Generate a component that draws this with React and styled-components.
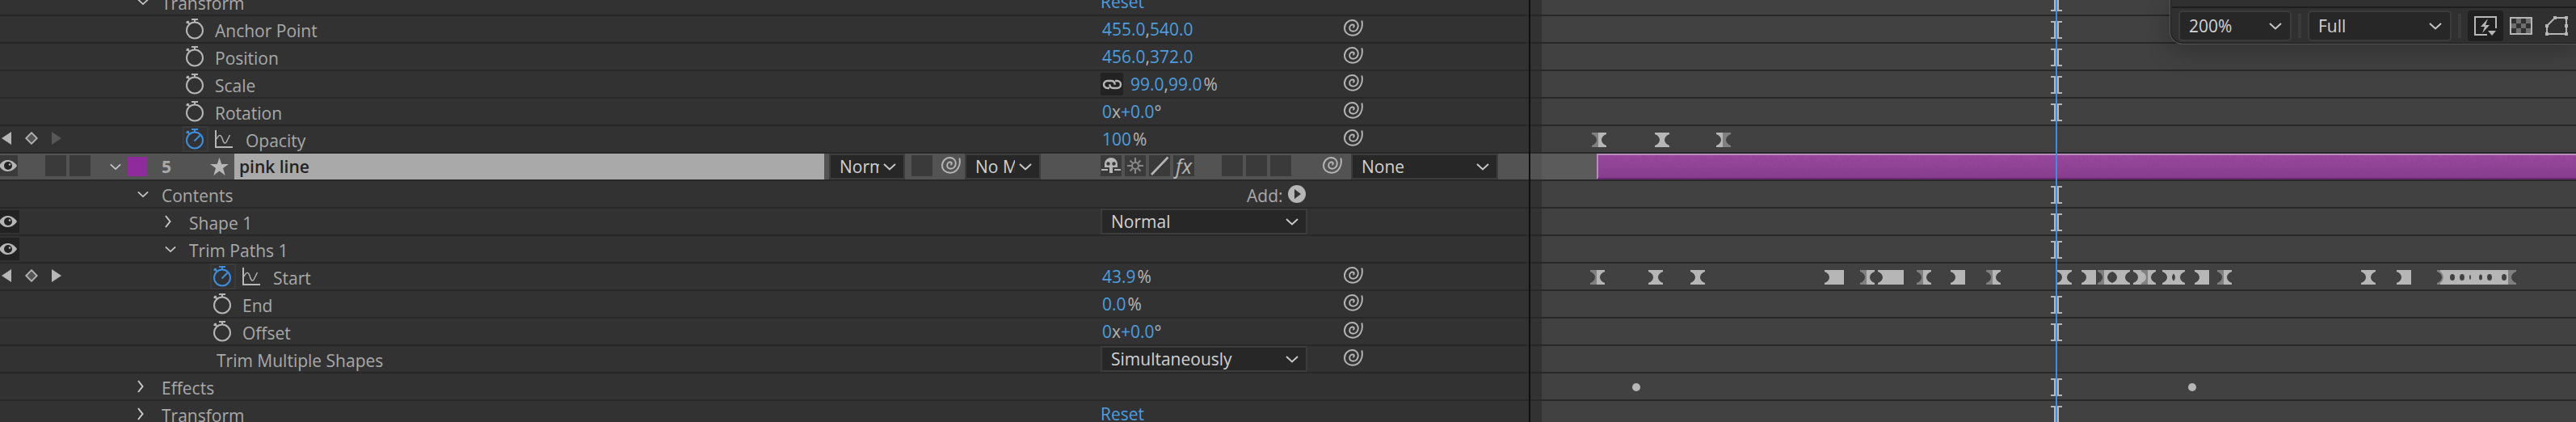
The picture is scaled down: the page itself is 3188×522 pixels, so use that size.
import React from 'react';
import styled, { createGlobalStyle } from 'styled-components';

const colors = {
  panel: '#323232',
  line: '#282828',
  lane: '#414141',
  selected: '#535353',
  selectedLane: '#5b5b5b',
  field: '#272727',
  fieldBorder: '#3c3c3c',
  well: '#3a3a3a',
  text: '#a9a9a9',
  textLight: '#d2d2d2',
  icon: '#b6b6b6',
  iconDim: '#808080',
  blue: '#4a9fe0',
  blueDark: '#3c8ee0',
  purple: '#8f2b9c',
};

const GlobalStyle = createGlobalStyle`
  * {
    box-sizing: border-box;
  }
  body {
    margin: 0;
    overflow: hidden;
    background-color: ${colors.panel};
  }
`;

const Page = styled.main`
  position: relative;
  display: grid;
  grid-template-columns: 1892px 1fr;
  height: 100vh;
  overflow: hidden;
  font-family: 'Open Sans', 'Noto Sans', sans-serif;
  font-size: 21px;
  font-weight: 500;
  line-height: 28px;
  color: ${colors.text};
  background-color: ${colors.panel};
`;

/* Both halves are scrolled together, the first row is partly out of view */
const Rows = styled.div`
  margin-top: -14px;
`;

const Row = styled.div`
  display: grid;
  grid-template-columns: 136px 1fr 342px 275px 255px;
  height: 34px;
  border-bottom: 2px solid ${colors.line};
  background-color: ${({ $selected }) => ($selected ? colors.selected : colors.panel)};
`;

const Cell = styled.div`
  display: flex;
  align-items: center;
  min-width: 0;
  grid-column: span ${({ $span }) => $span || 1};
  padding-left: ${({ $indent }) => $indent || 0}px;
`;

const Button = styled.button`
  display: flex;
  align-items: center;
  flex: none;
  padding: 0;
  border: 0;
  background: none;
  font: inherit;
  color: inherit;
`;

const KeyNav = styled.div`
  display: flex;
  align-items: center;
  gap: 17px;
  padding: 0 0 2px 2px;
`;

const EyeButton = styled(Button)`
  width: ${({ $small }) => ($small ? 22 : 24)}px;
  height: ${({ $small }) => ($small ? 26 : 28)}px;
  background-color: ${({ $small }) => ($small ? colors.well : '#222222')};
`;

const Well = styled(Button)`
  justify-content: center;
  width: 26px;
  height: 26px;
  background-color: ${colors.well};
`;

const WellGroup = styled.div`
  display: flex;
  gap: 4px;
  margin: 0 0 2px ${({ $left }) => $left || 0}px;
`;

const AvGroup = styled.div`
  display: flex;
  align-items: center;
  margin-bottom: ${({ $layer }) => ($layer ? 2 : 0)}px;
`;

const Twirl = styled(Button)`
  width: 14px;
  margin-right: ${({ $gap }) => $gap || 16}px;
`;

const Swatch = styled.span`
  width: 24px;
  height: 24px;
  background-color: ${colors.purple};
`;

const LayerNumber = styled.span`
  width: 78px;
  padding-left: 18px;
  font-weight: 700;
`;

const LayerName = styled.span`
  align-self: stretch;
  flex: 1;
  margin-left: 6px;
  padding: 2px 6px;
  font-weight: 600;
  color: #222222;
  background-color: #a9a9a9;
`;

const Label = styled.span`
  padding-top: 4px;
  margin-left: ${({ $gap }) => $gap || 0}px;
  white-space: nowrap;
`;

const Stopwatch = styled(Button)`
  justify-content: center;
  width: 32px;
  height: 32px;
  margin-right: 8px;
  border: 2px solid ${({ $active }) => ($active ? '#3a3a3a' : 'transparent')};
`;

const Value = styled(Button)`
  color: ${colors.blue};
`;

const Unit = styled.span`
  margin-left: ${({ $gap }) => $gap || 0}px;
  color: ${colors.icon};
`;

const LinkButton = styled(Button)`
  justify-content: center;
  width: 28px;
  height: 28px;
  margin: 0 9px 0 -2px;
  background-color: #222222;
`;

const AddButton = styled(Button)`
  gap: 6px;
  margin-left: 181px;
  color: ${colors.text};
`;

const PickWhip = styled(Button)`
  margin: 0 ${({ $right }) => $right || 0}px 4px ${({ $left }) => $left || 0}px;
`;

const SelectBox = styled.div`
  display: grid;
  grid-template-columns: 1fr ${({ $arrow }) => $arrow || 27}px;
  align-items: center;
  flex: none;
  width: ${({ $width }) => $width}px;
  height: ${({ $tall }) => ($tall ? 38 : 32)}px;
  margin-left: ${({ $left }) => $left || 0}px;
  > svg {
    grid-area: 1 / 2;
    pointer-events: none;
  }
`;

const SelectInput = styled.select`
  grid-area: 1 / 1 / 2 / 3;
  width: 100%;
  height: 100%;
  padding: 0 30px 0 11px;
  border: 2px solid ${colors.fieldBorder};
  border-radius: ${({ $round }) => ($round ? 5 : 0)}px;
  appearance: none;
  font: inherit;
  color: ${colors.textLight};
  background-color: ${colors.field};
`;

const Timeline = styled.section`
  position: relative;
  min-width: 0;
  border-left: 2px solid #101010;
`;

const LaneRow = styled.div`
  height: 34px;
  padding-left: 14px;
  border-bottom: 2px solid ${colors.line};
  background-color: ${({ $selected }) => ($selected ? colors.selected : colors.panel)};
`;

const Lane = styled.div`
  position: relative;
  height: 32px;
  background-color: ${({ $selected }) => ($selected ? colors.selectedLane : colors.lane)};
`;

/* Anything placed in time: keyframes, markers, the beam under the playhead */
const Mark = styled.svg`
  position: absolute;
  left: ${({ $at }) => $at}px;
  top: ${({ $top }) => $top}px;
`;

const LayerBar = styled.div`
  height: 32px;
  margin-left: 68px;
  border-top: 2px solid #b98cbb;
  border-left: 2px solid #b98cbb;
  border-bottom: 2px solid #6c2b71;
  background: linear-gradient(#9a4aa0, #873d8d);
  > svg {
    display: block;
  }
`;

const Playhead = styled.div`
  position: absolute;
  top: 0;
  bottom: 0;
  left: 650px;
  width: 2px;
  background-color: ${colors.blueDark};
`;

const Viewer = styled.aside`
  position: absolute;
  top: 0;
  right: 0;
  width: 503px;
  padding-top: 8px;
  border: 1px solid #565656;
  border-width: 0 0 1px 1px;
  border-radius: 0 0 0 16px;
  background-color: #303030;
  box-shadow: inset 1px -1px 0 #1f1f1f, 0 8px 30px rgba(0, 0, 0, 0.25);
`;

const ViewerBar = styled.div`
  display: flex;
  align-items: center;
  gap: 8px;
  height: 46px;
  margin-left: 2px;
  padding-left: 8px;
  border-top: 2px solid #1e1e1e;
`;

const Divider = styled.span`
  flex: none;
  width: 4px;
  height: 30px;
  background-color: #3b3b3b;
`;

const ViewerButton = styled(Button)`
  justify-content: center;
  width: 44px;
  height: 38px;
  margin-right: ${({ $pull }) => ($pull ? -8 : 0)}px;
  border-radius: 4px;
  background-color: ${({ $active }) => ($active ? '#202020' : 'transparent')};
`;

function Chevron({ closed }) {
  return closed ? (
    <svg width="8" height="16" viewBox="0 0 8 16" fill="none" stroke="#c8c8c8" strokeWidth="2">
      <path d="M1 1l5.5 7L1 15" />
    </svg>
  ) : (
    <svg width="16" height="9" viewBox="0 0 16 9" fill="none" stroke="#c8c8c8" strokeWidth="2">
      <path d="M1 1l7 6.5L15 1" />
    </svg>
  );
}

function Clock({ active }) {
  const color = active ? colors.blueDark : colors.icon;
  return (
    <svg width="24" height="28" viewBox="0 0 24 28" fill="none" stroke={color} strokeWidth="2">
      <circle cx="11" cy="15.5" r="10" />
      <path d="M7 2h8M11 2v4M0.500 6.500l3.500-2M1.500 4l3 4" />
      {active && <path d="M10.500 16.500l7-7" />}
    </svg>
  );
}

function Graph() {
  return (
    <svg width="22" height="22" viewBox="0 0 22 22" fill="none" stroke={colors.icon}>
      <path strokeWidth="2" d="M1 0v21h21" />
      <path strokeWidth="1.4" d="M2 11C5 5 7 5 9 10c2 7 4 8 6 3l3.500-7" />
    </svg>
  );
}

function Spiral() {
  return (
    <svg width="24" height="21" viewBox="0 0 24 21" fill="none" stroke={colors.icon} strokeWidth="1.9">
      <path d="M22.300 1.500C24.500 10 20 19.800 11 19.800 5 19.800 1 15.800 1 10.800 1 5 5.500 1 10.500 1c4.500 0 7.300 3.200 7.300 7 0 4-2.800 6.700-6 6.700-2.800 0-4.600-1.800-4.600-4.200 0-2.500 1.800-4 3.700-4 1 0 1.900.6 1.900 1.700 0 .9-.6 1.500-1.500 1.600" />
    </svg>
  );
}

function Eye() {
  return (
    <svg width="21" height="14" viewBox="0 0 21 14">
      <path fill={colors.icon} d="M-1 7C4-2.300 15-2.300 21 7 15 16.300 4 16.300-1 7z" />
      <circle cx="10" cy="7" r="5" fill="#222222" />
      <circle cx="12" cy="5.500" r="1.300" fill={colors.icon} />
    </svg>
  );
}

function Star() {
  return (
    <svg width="24" height="22" viewBox="0 0 24 22">
      <path fill={colors.icon} d="M11.500 0l2.800 8H23l-7 5 2.700 9-7.200-5.500L4.300 22 7 13 0 8h8.700z" />
    </svg>
  );
}

function Chain() {
  return (
    <svg width="25" height="13" viewBox="0 0 25 13" fill="none" stroke={colors.icon} strokeWidth="2.400">
      <path d="M9 11H6.500a4.500 4.500 0 0 1 0-9H11c3 0 4.700 2 4.700 4.700" />
      <path d="M16 2h2.500a4.500 4.500 0 0 1 0 9H14c-3 0-4.700-2-4.700-4.700" />
    </svg>
  );
}

function Shy() {
  return (
    <svg width="24" height="20" viewBox="0 0 24 20">
      <path fill={colors.icon} d="M4 12V8c0-5 4-8 8-8s8 3 8 8v4h-6v7h-4v-7zM0 14h8v2H0zM16 14h8v2h-8z" />
      <circle cx="8.500" cy="7.500" r="2.200" fill={colors.well} />
      <circle cx="15.500" cy="7.500" r="2.200" fill={colors.well} />
    </svg>
  );
}

function Sun() {
  return (
    <svg width="20" height="20" viewBox="0 0 20 20" fill="none" stroke="#8a8a8a" strokeWidth="2">
      <circle cx="10" cy="10" r="4" />
      <path d="M10 0v5M10 15v5M0 10h5M15 10h5M3.500 3.500l3 3M13.500 13.500l3 3M3.500 16.500l3-3M13.500 6.500l3-3" />
    </svg>
  );
}

const Fx = styled.span`
  font-size: 25px;
  font-style: italic;
  font-weight: 400;
  line-height: 26px;
  color: ${colors.icon};
`;

function Quality() {
  return (
    <svg width="24" height="24" viewBox="0 0 24 24" stroke={colors.icon} strokeWidth="2.600">
      <path d="M2 23L22.500 1.500" />
    </svg>
  );
}

function Select({
  label, value, width, left, arrow, tall,
}) {
  return (
    <SelectBox $width={width} $left={left} $arrow={arrow} $tall={tall}>
      <SelectInput aria-label={label} defaultValue={value} $round={tall}>
        <option>{value}</option>
      </SelectInput>
      <Chevron />
    </SelectBox>
  );
}

function KeyframeNav({ last }) {
  return (
    <KeyNav>
      <Button aria-label="Previous keyframe">
        <svg width="12" height="16" viewBox="0 0 12 16"><path fill={colors.icon} d="M12 0v16L0 8z" /></svg>
      </Button>
      <Button aria-label="Toggle keyframe">
        <svg width="16" height="16" viewBox="0 0 16 16">
          <path fill="#555555" stroke={colors.icon} strokeWidth="1.800" d="M8 1.200L14.800 8 8 14.800 1.200 8z" />
        </svg>
      </Button>
      <Button aria-label="Next keyframe">
        <svg width="12" height="16" viewBox="0 0 12 16"><path fill={last ? '#575757' : colors.icon} d="M0 0v16l12-8z" /></svg>
      </Button>
    </KeyNav>
  );
}

const BRIGHT_LEFT = 'M0 0H8V18H0V16C8 13 8 5 0 2z';
const BRIGHT_RIGHT = 'M18 0H8V18H18V16C10 13 10 5 18 2z';

/* kind: ease, first (nothing before it), last (nothing after it), hold */
function Keyframe({ at, kind }) {
  return (
    <Mark $at={at} $top={8} width="18" height="18" viewBox="0 0 18 18">
      <path fill={kind === 'first' ? colors.iconDim : colors.icon} d={BRIGHT_LEFT} />
      <path
        fill={kind === 'last' ? colors.iconDim : colors.icon}
        d={kind === 'hold' ? 'M8 0h10v18H8z' : BRIGHT_RIGHT}
      />
    </Mark>
  );
}

function KeyframeRun({ at }) {
  return (
    <Mark $at={at} $top={8} width="98" height="18" viewBox="0 0 98 18">
      <path fill={colors.iconDim} d="M0 0h8v18H0v-2c8-3 8-11 0-14zM88 0h10v2c-8 3-8 11 0 14v2H88z" />
      <path fill={colors.icon} d="M4 0h84v18H4v-2c5-3 5-11 0-14z" />
      <g fill={colors.lane}>
        <ellipse cx="19" cy="9" rx="3" ry="4" />
        <ellipse cx="31" cy="9" rx="3" ry="4" />
        <ellipse cx="41" cy="9" rx="1" ry="3" />
        <ellipse cx="54" cy="9" rx="2" ry="3.500" />
        <ellipse cx="65" cy="9" rx="3" ry="4" />
        <ellipse cx="83" cy="9" rx="3" ry="4" />
      </g>
    </Mark>
  );
}

function Beam() {
  return (
    <Mark $at={630} $top={6} width="14" height="22" viewBox="0 0 14 22">
      <path fill={colors.icon} d="M0 0h14v2h-4v18h4v2H0v-2h4V2H0z" />
    </Mark>
  );
}

function Texture() {
  return (
    <svg width="100%" height="28" aria-hidden="true">
      <filter id="grain" x="0" y="0" width="100%" height="100%">
        <feTurbulence type="fractalNoise" baseFrequency="0.35" numOctaves="2" />
        <feColorMatrix values="0 0 0 0 0.25  0 0 0 0 0.05  0 0 0 0 0.25  1.4 0 0 0 -0.5" />
      </filter>
      <rect width="100%" height="28" filter="url(#grain)" opacity="0.7" />
    </svg>
  );
}

const degrees = [['0'], ['x', 'unit'], ['+0.0'], ['°', 'unit']];

const rows = [
  { type: 'group', label: 'Transform', level: 0, reset: true, beam: true },
  { type: 'property', label: 'Anchor Point', level: 0, beam: true, value: [['455.0'], [',', 'unit'], ['540.0']] },
  { type: 'property', label: 'Position', level: 0, beam: true, value: [['456.0'], [',', 'unit'], ['372.0']] },
  {
    type: 'property', label: 'Scale', level: 0, beam: true, linked: true, value: [['99.0'], [',', 'unit'], ['99.0'], ['%', 'unit', 2]],
  },
  { type: 'property', label: 'Rotation', level: 0, beam: true, value: degrees },
  {
    type: 'property',
    label: 'Opacity',
    level: 0,
    animated: true,
    last: true,
    value: [['100'], ['%', 'unit', 2]],
    keys: [[62, 'first'], [140, 'ease'], [216, 'last']],
  },
  { type: 'layer' },
  { type: 'group', label: 'Contents', level: 0, add: true, beam: true },
  {
    type: 'group', label: 'Shape 1', level: 1, closed: true, eye: true, select: 'Normal', beam: true,
  },
  { type: 'group', label: 'Trim Paths 1', level: 1, eye: true, beam: true },
  {
    type: 'property',
    label: 'Start',
    level: 1,
    animated: true,
    value: [['43.9'], ['%', 'unit', 2]],
    keys: [
      [60, 'first'], [132, 'ease'], [184, 'ease'], [350, 'hold'], [356, 'hold'],
      [394, 'first'], [416, 'hold'], [424, 'hold'], [430, 'hold'], [464, 'first'],
      [506, 'hold'], [550, 'first'], [638, 'ease'], [668, 'hold'], [688, 'first'],
      [706, 'ease'], [710, 'ease'], [732, 'hold'], [742, 'first'], [768, 'ease'],
      [778, 'ease'], [808, 'hold'], [836, 'first'], [1014, 'ease'], [1058, 'hold'],
    ],
    run: 1108,
  },
  { type: 'property', label: 'End', level: 1, beam: true, value: [['0.0'], ['%', 'unit', 2]] },
  { type: 'property', label: 'Offset', level: 1, beam: true, value: degrees },
  { type: 'option', label: 'Trim Multiple Shapes', select: 'Simultaneously' },
  {
    type: 'group', label: 'Effects', level: 0, closed: true, beam: true, dots: [112, 800],
  },
  {
    type: 'group', label: 'Transform', level: 0, closed: true, reset: true, beam: true,
  },
];

function GroupRow({ row }) {
  return (
    <Row>
      <Cell>
        {row.eye && <EyeButton aria-label={`Show ${row.label}`}><Eye /></EyeButton>}
      </Cell>
      <Cell $span={2} $indent={34 + row.level * 34}>
        <Twirl aria-label={`Toggle ${row.label}`}><Chevron closed={row.closed} /></Twirl>
        <Label>{row.label}</Label>
      </Cell>
      <Cell $span={2}>
        {row.reset && <Value>Reset</Value>}
        {row.select && <Select label={`${row.label} mode`} value={row.select} width={256} />}
        {row.add && (
          <AddButton>
            <Label>Add:</Label>
            <svg width="22" height="22" viewBox="0 0 22 22">
              <circle cx="11" cy="11" r="11" fill={colors.icon} />
              <path fill={colors.panel} d="M8 5v12l8-6z" />
            </svg>
          </AddButton>
        )}
      </Cell>
    </Row>
  );
}

function PropertyRow({ row }) {
  return (
    <Row>
      <Cell>{row.animated && <KeyframeNav last={row.last} />}</Cell>
      <Cell $span={2} $indent={90 + row.level * 34}>
        <Stopwatch aria-label={`Animate ${row.label}`} $active={row.animated}>
          <Clock active={row.animated} />
        </Stopwatch>
        {row.animated && <Graph />}
        <Label $gap={row.animated ? 16 : 0}>{row.label}</Label>
      </Cell>
      <Cell $indent={2}>
        {row.linked && <LinkButton aria-label="Constrain proportions"><Chain /></LinkButton>}
        {row.value.map(([text, unit, gap], i) => (
          unit
            ? <Unit key={i} $gap={gap}>{text}</Unit>
            : <Value key={i}>{text}</Value>
        ))}
      </Cell>
      <Cell $indent={26}>
        <PickWhip aria-label={`${row.label} expression`}><Spiral /></PickWhip>
      </Cell>
    </Row>
  );
}

function OptionRow({ row }) {
  return (
    <Row>
      <Cell />
      <Cell $span={2} $indent={132}><Label>{row.label}</Label></Cell>
      <Cell><Select label={row.label} value={row.select} width={256} /></Cell>
      <Cell $indent={26}>
        <PickWhip aria-label={`${row.label} expression`}><Spiral /></PickWhip>
      </Cell>
    </Row>
  );
}

function LayerRow() {
  return (
    <Row $selected>
      <Cell>
        <AvGroup $layer>
          <EyeButton $small aria-label="Show layer"><Eye /></EyeButton>
        </AvGroup>
        <WellGroup $left={34}>
          <Well aria-label="Solo" />
          <Well aria-label="Lock" />
        </WellGroup>
      </Cell>
      <Cell>
        <Twirl $gap={8} aria-label="Toggle layer"><Chevron /></Twirl>
        <Swatch />
        <LayerNumber>5</LayerNumber>
        <Star />
        <LayerName>pink line</LayerName>
      </Cell>
      <Cell $indent={6}>
        <Select label="Blending mode" value="Normal" width={94} />
        <WellGroup $left={8}><Well aria-label="Preserve transparency" /></WellGroup>
        <PickWhip $left={11} $right={5} aria-label="Track matte pick whip"><Spiral /></PickWhip>
        <Select label="Track matte" value="No Matte" width={94} />
      </Cell>
      <Cell>
        <WellGroup>
          <Well aria-label="Shy"><Shy /></Well>
          <Well aria-label="Collapse transformations"><Sun /></Well>
          <Well aria-label="Quality"><Quality /></Well>
          <Well><Fx>fx</Fx></Well>
        </WellGroup>
        <WellGroup $left={34}>
          <Well aria-label="Motion blur" />
          <Well aria-label="Adjustment layer" />
          <Well aria-label="3D layer" />
        </WellGroup>
      </Cell>
      <Cell>
        <PickWhip $right={11} aria-label="Parent pick whip"><Spiral /></PickWhip>
        <Select label="Parent" value="None" width={182} />
      </Cell>
    </Row>
  );
}

const rowTypes = {
  group: GroupRow,
  property: PropertyRow,
  option: OptionRow,
  layer: LayerRow,
};

function TimelineRow({ row }) {
  const selected = row.type === 'layer';
  return (
    <LaneRow $selected={selected}>
      <Lane $selected={selected}>
        {selected && <LayerBar><Texture /></LayerBar>}
        {row.beam && <Beam />}
        {row.keys && row.keys.map(([at, kind]) => <Keyframe key={at} at={at} kind={kind} />)}
        {row.run && <KeyframeRun at={row.run} />}
        {row.dots && row.dots.map((at) => (
          <Mark key={at} $at={at} $top={12} width="10" height="10" viewBox="0 0 10 10">
            <circle cx="5" cy="5" r="5" fill={colors.icon} />
          </Mark>
        ))}
      </Lane>
    </LaneRow>
  );
}

function ViewerPanel() {
  return (
    <Viewer>
      <ViewerBar>
        <Select tall label="Magnification" value="200%" width={140} arrow={28} />
        <Divider />
        <Select tall label="Resolution" value="Full" width={178} arrow={28} />
        <Divider />
        <ViewerButton $active $pull aria-label="Fast previews">
          <svg width="28" height="26" viewBox="0 0 28 26">
            <path fill="none" stroke={colors.icon} strokeWidth="2" d="M16 24H1V2h26v14" />
            <path fill={colors.icon} d="M17 4L8 14h5l-3 8 9-10h-5zM17 19h10l-5 6z" />
          </svg>
        </ViewerButton>
        <ViewerButton $pull aria-label="Transparency grid">
          <svg width="28" height="22" viewBox="0 0 28 22">
            <path fill="#6e6e6e" d="M8 2h6v6H8zM20 2h6v6h-6zM2 8h6v6H2zM14 8h6v6h-6zM8 14h6v6H8zM20 14h6v6h-6z" />
            <path fill="none" stroke={colors.icon} strokeWidth="2" d="M1 1h26v20H1z" />
          </svg>
        </ViewerButton>
        <ViewerButton aria-label="Mask visibility">
          <svg width="28" height="24" viewBox="0 0 28 24">
            <path fill="none" stroke={colors.icon} strokeWidth="2" d="M2 22V12L12 2h14v20z" />
            <path fill={colors.icon} d="M0 20h4v4H0zM24 20h4v4h-4zM24 0h4v4h-4zM10 0h4v4h-4zM0 10h4v4H0zM24 10h4v4h-4z" />
          </svg>
        </ViewerButton>
      </ViewerBar>
    </Viewer>
  );
}

export default function App() {
  return (
    <>
      <GlobalStyle />
      <Page>
        <Rows>
          {rows.map((row, i) => {
            const RowComponent = rowTypes[row.type];
            return <RowComponent key={i} row={row} />;
          })}
        </Rows>
        <Timeline>
          <Rows>
            {rows.map((row, i) => <TimelineRow key={i} row={row} />)}
          </Rows>
          <Playhead />
        </Timeline>
        <ViewerPanel />
      </Page>
    </>
  );
}
